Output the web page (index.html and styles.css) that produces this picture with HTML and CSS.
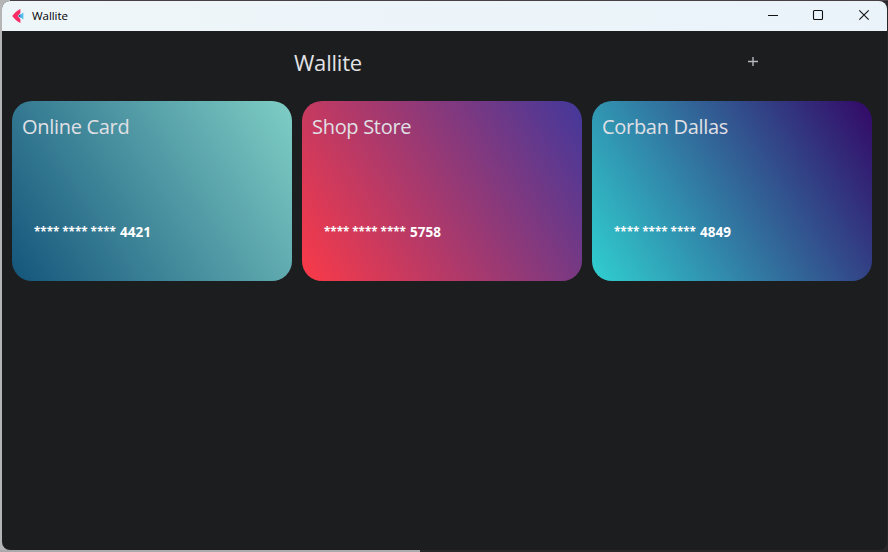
FILE: index.html
```
<!DOCTYPE html>
<html lang="en">
<head>
<meta charset="utf-8">
<title>Wallite</title>
<link rel="stylesheet" href="styles.css">
</head>
<body>
<div class="window">
  <header class="titlebar">
    <svg class="logo" width="12" height="14" viewBox="0 0 12 14"><path fill="#52bdeb" d="M11.400 3.600v6.800L6.500 7z"/><path fill="#f62d67" d="M8.400 0v4L5.700 7l2.700 3.200V14C4.500 12 2 9.500.2 7 2 4.500 4.500 2 8.400 0z"/><path fill="#3268a5" d="M8.400 5v4L6.200 7z"/></svg>
    <span class="caption">Wallite</span>
    <div class="controls">
      <svg width="46" height="30" viewBox="0 0 46 30"><path d="M18 14.500h10"/></svg>
      <svg width="46" height="30" viewBox="0 0 46 30"><rect x="17.500" y="9.500" width="9" height="9" rx="1"/></svg>
      <svg width="46" height="30" viewBox="0 0 46 30"><path d="M17.300 9.300l9.400 9.400M26.700 9.300l-9.400 9.400"/></svg>
    </div>
  </header>
  <div class="toolbar">
    <h1>Wallite</h1>
    <svg class="add" width="10" height="10" viewBox="0 0 10 10"><path d="M0 4.500h10M5 0v9"/></svg>
  </div>
  <main class="cards">
    <section class="card ocean"><h2>Online Card</h2><p><span class="mask">**** **** ****</span> <span>4421</span></p></section>
    <section class="card sunset"><h2>Shop Store</h2><p><span class="mask">**** **** ****</span> <span>5758</span></p></section>
    <section class="card violet"><h2>Corban Dallas</h2><p><span class="mask">**** **** ****</span> <span>4849</span></p></section>
  </main>
</div>
</body>
</html>
```
FILE: styles.css
```
* { box-sizing: border-box; }
body {
  margin: 0;
  width: 888px;
  height: 552px;
  padding: 1px 1px 2px 2px;
  overflow: hidden;
  background:
    linear-gradient(#aaa8ab, #aaa8ab) 0 100% / 420px 2px no-repeat,
    linear-gradient(#b5b5b5, #b5b5b5) 0 0 / 10px 100% no-repeat,
    linear-gradient(#464045, #464045) 0 0 / 100% 1px no-repeat,
    #29262a;
  font-family: "Open Sans", "Noto Sans", sans-serif;
}
.window {
  height: 549px;
  border-radius: 8px;
  overflow: hidden;
  background: #1c1d1f;
}
.titlebar {
  height: 30px;
  display: flex;
  align-items: center;
  background: linear-gradient(90deg, #eef6f9, #eaf3fa);
}
.logo { margin-left: 10px; margin-top: -1px; }
.caption {
  margin-left: 8px;
  font-size: 11.5px;
  line-height: 16px;
  letter-spacing: -0.05px;
  color: #000;
}
.controls { display: flex; margin-left: auto; margin-right: -1px; }
.controls svg { display: block; fill: none; stroke: #111; stroke-width: 1.1; }
.toolbar {
  height: 70px;
  display: grid;
  grid-template-columns: 746px 1fr;
  align-items: center;
}
h1, h2, p { margin: 0; font-weight: 400; white-space: nowrap; }
h1 {
  padding-left: 292px;
  padding-bottom: 8px;
  font-size: 22px;
  line-height: 30px;
  letter-spacing: -0.2px;
  color: #e2e2e5;
}
.add { margin-bottom: 8px; fill: none; stroke: #b5b9be; stroke-width: 1.4; }
.cards { display: flex; gap: 10px; padding-left: 10px; }
.card {
  width: 280px;
  height: 180px;
  border-radius: 20px;
  padding: 12px 10px;
}
.card h2 { font-size: 20px; line-height: 28px; letter-spacing: -0.3px; color: #e0e0e5; }
.card p {
  margin: 81px 0 0 12px;
  display: flex;
  gap: 4px;
  font-size: 13.5px;
  line-height: 20px;
  font-weight: 700;
  color: #fff;
}
.mask { width: 82px; font-size: 11.6px; line-height: 19px; }
.ocean { background: linear-gradient(57.26deg, #14557b, #7fcec5); }
.sunset { background: linear-gradient(57.26deg, #fa3a48, #43389b); }
.violet { background: linear-gradient(57.26deg, #30cfd0, #330867); }
```
